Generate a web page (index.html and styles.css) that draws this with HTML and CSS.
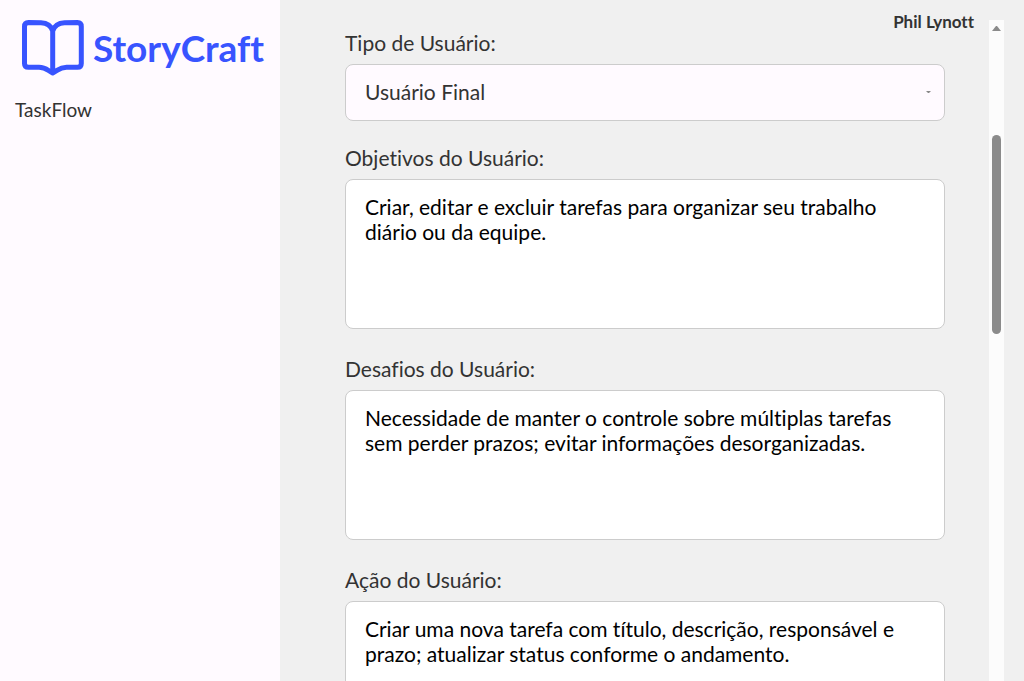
FILE: index.html
```html
<!DOCTYPE html>
<html lang="pt-BR">
<head>
<meta charset="utf-8">
<meta name="viewport" content="width=device-width, initial-scale=1">
<title>StoryCraft</title>
<link rel="stylesheet" href="styles.css">
</head>
<body>
<div class="app">
  <aside class="sidebar">
    <div class="brand">
      <svg class="brand-icon" viewBox="0 0 64 58" fill="none" stroke="currentColor" stroke-width="5" stroke-linejoin="round" stroke-linecap="round" aria-hidden="true">
        <path d="M31.700 12C30 6.500 26 4 20 3.800L7.500 3.500Q3.500 3.500 3.500 7.500V44.500Q3.500 48.300 7.500 48.300H18C25 48.300 26 51 31.700 54C37.500 51 38.500 48.300 45.500 48.300H56.500Q60.300 48.300 60.300 44.500V7.500Q60.300 3.500 56.500 3.500L43.500 3.800C37.500 4 33.500 6.500 31.700 12V53"/>
      </svg>
      <span class="brand-name">StoryCraft</span>
    </div>
    <nav><a class="project" href="#">TaskFlow</a></nav>
  </aside>
  <main class="main">
    <form class="form">
      <div class="field">
        <label for="tipo">Tipo de Usuário:</label>
        <div class="select-wrap">
          <select id="tipo"><option>Usuário Final</option></select>
          <svg class="caret" viewBox="0 0 5 3" aria-hidden="true"><path d="M0 0H5L3 2H2Z"/></svg>
        </div>
      </div>
      <div class="field">
        <label for="objetivos">Objetivos do Usuário:</label>
        <textarea id="objetivos">Criar, editar e excluir tarefas para organizar seu trabalho diário ou da equipe.</textarea>
      </div>
      <div class="field">
        <label for="desafios">Desafios do Usuário:</label>
        <textarea id="desafios">Necessidade de manter o controle sobre múltiplas tarefas sem perder prazos; evitar informações desorganizadas.</textarea>
      </div>
      <div class="field">
        <label for="acao">Ação do Usuário:</label>
        <textarea id="acao">Criar uma nova tarefa com título, descrição, responsável e prazo; atualizar status conforme o andamento.</textarea>
      </div>
    </form>
    <div class="user">Phil Lynott</div>
    <div class="scrollbar" aria-hidden="true">
      <svg class="arrow" viewBox="0 0 9 5"><path d="M0 5L4 0H5L9 5Z"/></svg>
      <div class="thumb"></div>
    </div>
  </main>
</div>
</body>
</html>
```
FILE: styles.css
```css
* { box-sizing: border-box; }
body {
  margin: 0;
  background: #f0f0f0;
  color: #333;
  font-family: Lato, "Open Sans", sans-serif;
  font-variant-ligatures: none;
  overflow: hidden;
}
.app { display: flex; height: 100vh; }
.sidebar {
  flex: 0 0 280px;
  padding: 19px 15px;
  background: #fffaff;
}
.brand {
  display: flex;
  align-items: center;
  gap: 8px;
  padding-left: 6px;
  color: #3854ff;
}
.brand-icon { width: 64px; height: 58px; flex: none; }
.brand-name { font-size: 37px; line-height: 44px; font-weight: 700; }
.project {
  display: block;
  margin-top: 22px;
  font-size: 19px;
  line-height: 22px;
  color: #333;
  text-decoration: none;
}
.main {
  position: relative;
  flex: 1;
  display: flex;
  justify-content: space-between;
  padding: 20px 20px 0 65px;
  overflow: hidden;
}
.form {
  flex: 0 1 600px;
  display: flex;
  flex-direction: column;
  gap: 25px;
  padding-top: 11px;
}
.field { display: flex; flex-direction: column; gap: 9px; }
label { font-size: 21px; line-height: 24px; }
select, textarea {
  display: block;
  width: 100%;
  border: 1px solid #ccc;
  border-radius: 8px;
  font-family: inherit;
  font-variant-ligatures: none;
  font-size: 21px;
  line-height: 25px;
}
select {
  appearance: none;
  height: 57px;
  padding: 14px 19px 16px;
  background: #fffaff;
  color: #333;
}
textarea {
  height: 150px;
  margin-bottom: 3px;
  padding: 14px 19px;
  background: #fff;
  color: #000;
  resize: none;
  overflow: hidden;
}
.select-wrap { position: relative; }
.caret {
  position: absolute;
  right: 14px;
  top: 27px;
  width: 5px;
  height: 3px;
  fill: #888;
}
.user {
  position: absolute;
  top: 12px;
  right: 50px;
  font-size: 17px;
  line-height: 20px;
  font-weight: 700;
}
.scrollbar {
  flex: 0 0 15px;
  display: flex;
  flex-direction: column;
  align-items: center;
  gap: 104px;
  padding-top: 6px;
  background: #fcfcfc;
}
.arrow { flex: none; width: 9px; height: 5px; fill: #8b8b8b; }
.thumb { flex: none; width: 9px; height: 199px; border-radius: 5px; background: #8b8b8b; }
```
